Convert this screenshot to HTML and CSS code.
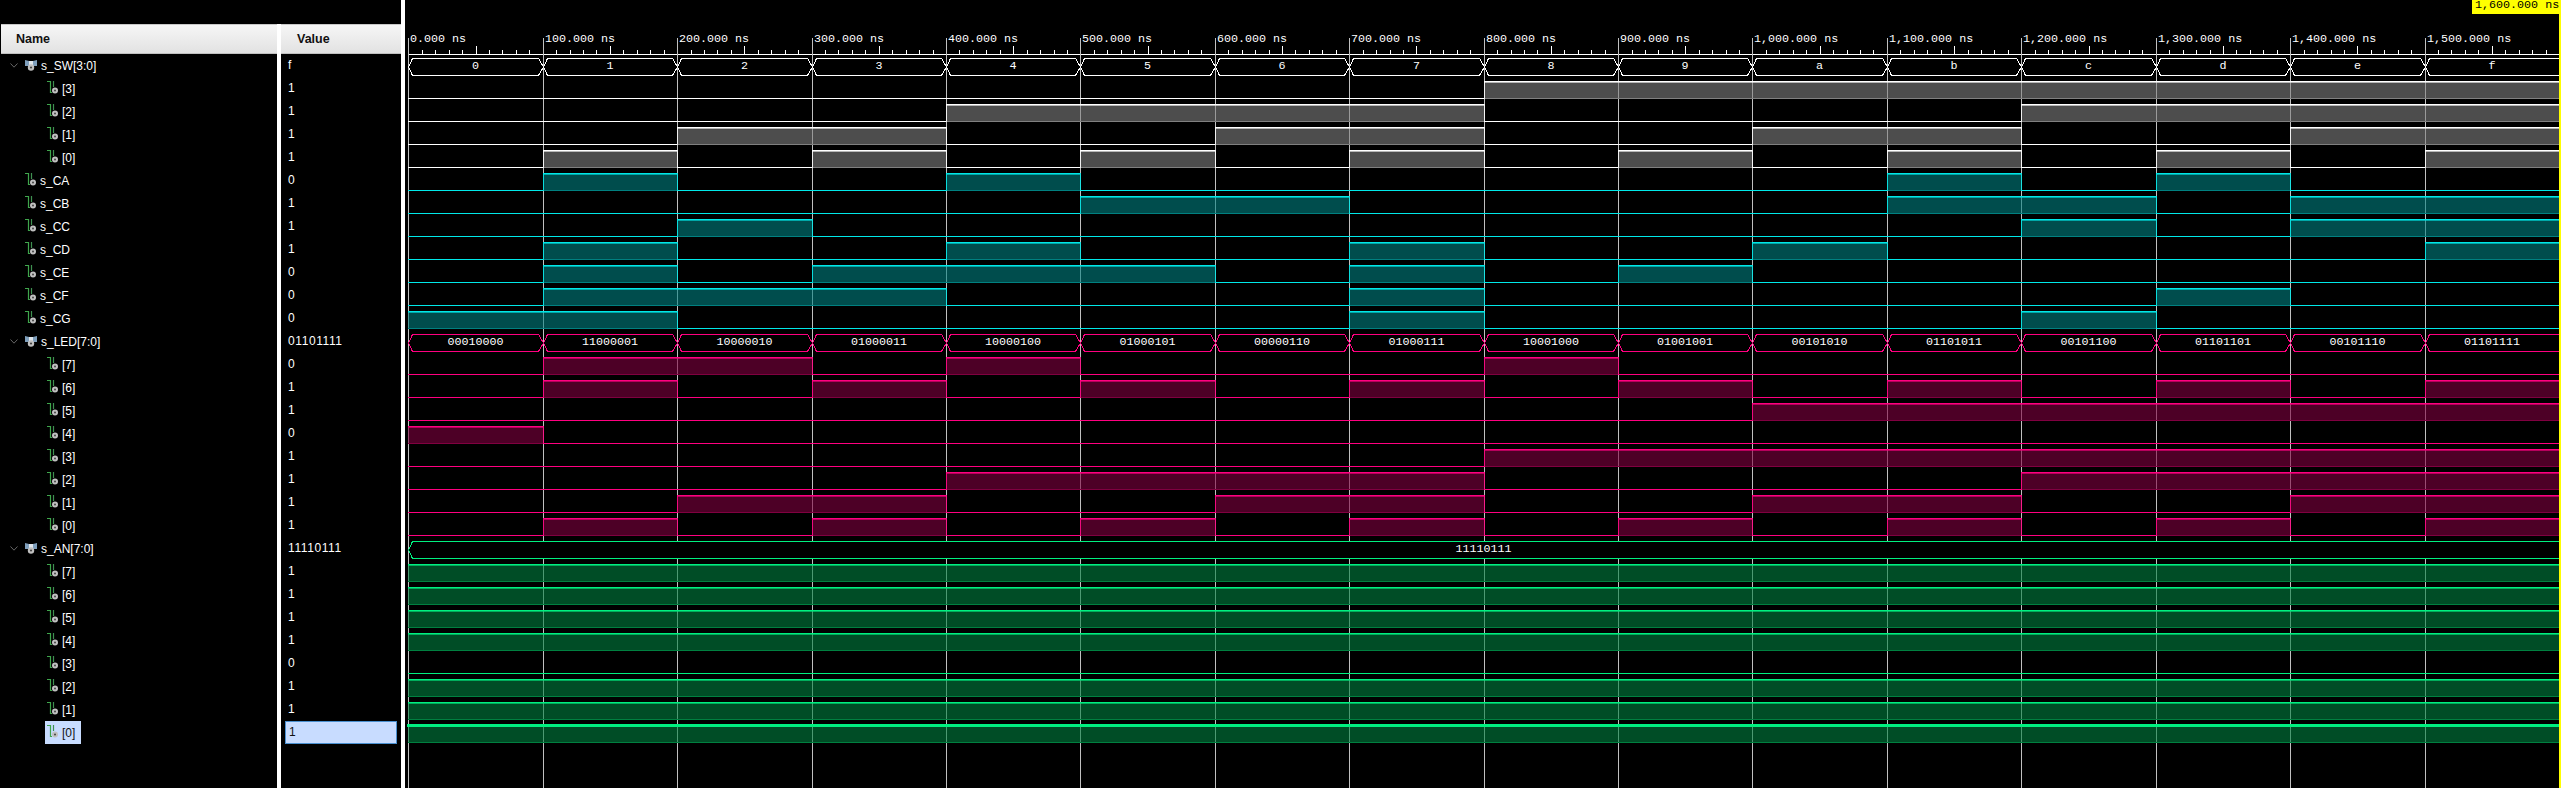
FILE: index.html
```html
<!DOCTYPE html>
<html lang="en">
	<head>
		<meta charset="utf-8">
		<title>Waveform</title>
		<link rel="stylesheet" href="styles.css">
		<script src="wave.js" defer></script>
	</head>
	<body>
		<svg class="defs" width="0" height="0">
			<symbol id="bit" viewBox="0 0 11 13">
				<path d="M0 .5H3.5V11.5H5" fill="none" stroke="#3fa64c" stroke-width="1.2"/>
				<path d="M6.5 0V6" fill="none" stroke="#3f9050" stroke-width="1.2"/>
				<circle cx="8" cy="9.5" r="3" fill="#c0c0c0"/>
				<circle cx="8" cy="9.5" r="1" fill="#444"/>
			</symbol>
			<symbol id="bus" viewBox="0 0 12 11">
				<path d="M0 0L4 1V6H0Z" fill="#7f9fbc"/>
				<path d="M12 0L8 1V6H12Z" fill="#7f9fbc"/>
				<path d="M4 1H8V6H4Z" fill="#dfe6ec"/>
				<circle cx="6" cy="7.5" r="3.2" fill="#c0c0c0"/>
				<circle cx="6" cy="7.5" r="1.1" fill="#444"/>
			</symbol>
			<symbol id="chevron" viewBox="0 0 8 5">
				<path d="M.5 .5L4 4.2L7.5 .5" fill="none" stroke="#666"/>
			</symbol>
		</svg>

		<div class="main">
			<div class="names">
				<div class="head">Name</div>
				<div class="row top"><svg class="chev"><use href="#chevron"/></svg><span class="item"><svg class="icon-bus"><use href="#bus"/></svg>s_SW[3:0]</span></div>
				<div class="row sub"><span class="item"><svg class="icon"><use href="#bit"/></svg>[3]</span></div>
				<div class="row sub"><span class="item"><svg class="icon"><use href="#bit"/></svg>[2]</span></div>
				<div class="row sub"><span class="item"><svg class="icon"><use href="#bit"/></svg>[1]</span></div>
				<div class="row sub"><span class="item"><svg class="icon"><use href="#bit"/></svg>[0]</span></div>
				<div class="row top"><span class="item"><svg class="icon"><use href="#bit"/></svg>s_CA</span></div>
				<div class="row top"><span class="item"><svg class="icon"><use href="#bit"/></svg>s_CB</span></div>
				<div class="row top"><span class="item"><svg class="icon"><use href="#bit"/></svg>s_CC</span></div>
				<div class="row top"><span class="item"><svg class="icon"><use href="#bit"/></svg>s_CD</span></div>
				<div class="row top"><span class="item"><svg class="icon"><use href="#bit"/></svg>s_CE</span></div>
				<div class="row top"><span class="item"><svg class="icon"><use href="#bit"/></svg>s_CF</span></div>
				<div class="row top"><span class="item"><svg class="icon"><use href="#bit"/></svg>s_CG</span></div>
				<div class="row top"><svg class="chev"><use href="#chevron"/></svg><span class="item"><svg class="icon-bus"><use href="#bus"/></svg>s_LED[7:0]</span></div>
				<div class="row sub"><span class="item"><svg class="icon"><use href="#bit"/></svg>[7]</span></div>
				<div class="row sub"><span class="item"><svg class="icon"><use href="#bit"/></svg>[6]</span></div>
				<div class="row sub"><span class="item"><svg class="icon"><use href="#bit"/></svg>[5]</span></div>
				<div class="row sub"><span class="item"><svg class="icon"><use href="#bit"/></svg>[4]</span></div>
				<div class="row sub"><span class="item"><svg class="icon"><use href="#bit"/></svg>[3]</span></div>
				<div class="row sub"><span class="item"><svg class="icon"><use href="#bit"/></svg>[2]</span></div>
				<div class="row sub"><span class="item"><svg class="icon"><use href="#bit"/></svg>[1]</span></div>
				<div class="row sub"><span class="item"><svg class="icon"><use href="#bit"/></svg>[0]</span></div>
				<div class="row top"><svg class="chev"><use href="#chevron"/></svg><span class="item"><svg class="icon-bus"><use href="#bus"/></svg>s_AN[7:0]</span></div>
				<div class="row sub"><span class="item"><svg class="icon"><use href="#bit"/></svg>[7]</span></div>
				<div class="row sub"><span class="item"><svg class="icon"><use href="#bit"/></svg>[6]</span></div>
				<div class="row sub"><span class="item"><svg class="icon"><use href="#bit"/></svg>[5]</span></div>
				<div class="row sub"><span class="item"><svg class="icon"><use href="#bit"/></svg>[4]</span></div>
				<div class="row sub"><span class="item"><svg class="icon"><use href="#bit"/></svg>[3]</span></div>
				<div class="row sub"><span class="item"><svg class="icon"><use href="#bit"/></svg>[2]</span></div>
				<div class="row sub"><span class="item"><svg class="icon"><use href="#bit"/></svg>[1]</span></div>
				<div class="row sub"><span class="item selected"><svg class="icon"><use href="#bit"/></svg>[0]</span></div>
			</div>
			<div class="sash"></div>
			<div class="values">
				<div class="head">Value</div>
				<div class="val">f</div>
				<div class="val">1</div>
				<div class="val">1</div>
				<div class="val">1</div>
				<div class="val">1</div>
				<div class="val">0</div>
				<div class="val">1</div>
				<div class="val">1</div>
				<div class="val">1</div>
				<div class="val">0</div>
				<div class="val">0</div>
				<div class="val">0</div>
				<div class="val">01101111</div>
				<div class="val">0</div>
				<div class="val">1</div>
				<div class="val">1</div>
				<div class="val">0</div>
				<div class="val">1</div>
				<div class="val">1</div>
				<div class="val">1</div>
				<div class="val">1</div>
				<div class="val">11110111</div>
				<div class="val">1</div>
				<div class="val">1</div>
				<div class="val">1</div>
				<div class="val">1</div>
				<div class="val">0</div>
				<div class="val">1</div>
				<div class="val">1</div>
				<div class="val editing">1</div>
			</div>
			<div class="sash full"></div>
			<svg id="wave" class="wave" width="2156" height="788" viewBox="405 0 2156 788"></svg>
		</div>
	</body>
</html>
```

FILE: styles.css
```css
body {
	margin: 0;
	background-color: #000;
	color: #fff;
	font-family: "Liberation Sans", sans-serif;
	font-size: 12px;
	overflow: hidden;
}

.defs {
	position: absolute;
}

.main {
	display: flex;
	height: 788px;
}

.names {
	width: 277px;
	padding-top: 24px;
	box-sizing: border-box;
}
.values {
	width: 120px;
	padding-top: 24px;
	box-sizing: border-box;
}
.sash {
	width: 4px;
	margin-top: 24px;
	background-color: #fff;
}
.sash.full {
	margin-top: 0;
}
.wave {
	display: block;
	flex: none;
}

.head {
	height: 28px;
	line-height: 28px;
	border-top: 1px solid #c8c8c8;
	border-bottom: 1px solid #c0c0c0;
	background: linear-gradient(#f6f6f6, #e2e2e2);
	color: #111;
	font-size: 12.5px;
	font-weight: bold;
}
.names .head {
	margin-left: 1px;
	padding-left: 15px;
}
.values .head {
	padding-left: 16px;
}

.row {
	display: flex;
	align-items: center;
	height: 23px;
}
.row.top {
	padding-left: 23px;
}
.row.sub {
	padding-left: 45px;
}
.chev {
	width: 8px;
	height: 5px;
	margin-left: -13px;
	margin-right: 5px;
	flex: none;
}
.item {
	display: flex;
	align-items: center;
	height: 23px;
	padding: 0 2px;
}
.item.selected {
	background-color: #c8dcff;
	color: #111;
	padding-right: 6px;
}
.icon {
	width: 11px;
	height: 13px;
	margin-right: 4px;
	margin-bottom: 2px;
	flex: none;
}
.icon-bus {
	width: 12px;
	height: 11px;
	margin-right: 4px;
	flex: none;
}

.val {
	height: 23px;
	line-height: 23px;
	padding-left: 7px;
	letter-spacing: .6px;
}
.val.editing {
	height: 21px;
	line-height: 21px;
	margin-left: 4px;
	padding-left: 3px;
	width: 107px;
	border: 1px solid #4a90d0;
	background-color: #c8dcff;
	color: #111;
}

.wave-text {
	font-family: "Liberation Mono", monospace;
	font-size: 11.7px;
	fill: #fff;
}
.wave-text.middle {
	text-anchor: middle;
}
.wave-text.cursor {
	fill: #000;
}
```

FILE: wave.js
```js
const svg = document.getElementById("wave")
const NS = "http://www.w3.org/2000/svg"

const X0 = 408.3
const PITCH = 134.42
const XEND = 2559
const gx = n => Math.min(Math.round(X0 + PITCH * n), XEND)

const WHITE = { line: "#fff", dim: "#808080" }
const TEAL = { line: "#00e8e8", dim: "#008080" }
const PINK = { line: "#ff0080", dim: "#800040" }
const GREEN = { line: "#00f080", dim: "#008040" }

const add = (name, attrs, text) => {
	const el = document.createElementNS(NS, name)
	for (const k in attrs) el.setAttribute(k, attrs[k])
	if (text != null) el.textContent = text
	svg.appendChild(el)
	return el
}
const box = (x, y, w, h, fill, extra) =>
	add("rect", { x, y, width: w, height: h, fill, "shape-rendering": "crispEdges", ...extra })

const rowTop = r => 58 + 23 * r
const rowLow = r => 75 + 23 * r

// ruler + grid
box(X0 | 0, 54, XEND - (X0 | 0), 1, "#fff")
for (let i = 0; i < 160; i++) {
	const x = Math.round(X0 + PITCH * i / 10)
	if (i % 10 == 0) continue
	const h = i % 5 == 0 ? 8 : 4
	box(x, 54 - h, 1, h, "#fff")
}
const labels = ["0.000 ns", "100.000 ns", "200.000 ns", "300.000 ns", "400.000 ns", "500.000 ns", "600.000 ns", "700.000 ns", "800.000 ns",
	"900.000 ns", "1,000.000 ns", "1,100.000 ns", "1,200.000 ns", "1,300.000 ns", "1,400.000 ns", "1,500.000 ns"]
labels.forEach((text, n) => {
	box(gx(n), 38, 1, 750, "#c0c0c0")
	add("text", { x: gx(n) + 2, y: 42, class: "wave-text" }, text)
})

const bus = (r, color, cells) => {
	const top = rowTop(r) + .5
	const low = rowLow(r) + .5
	const mid = (top + low) / 2
	cells.forEach(c => {
		const a = gx(c.from)
		const b = gx(c.to)
		const last = b >= XEND
		const points = [[a + .5, mid], [a + 4.5, top], [b - 4.5, top]]
		if (!last) points.push([b + .5, mid])
		else points.push([b, top], [b, low])
		points.push([b - 4.5, low], [a + 4.5, low], [a + .5, mid])
		// black fill hides the grid line inside the bus
		add("polyline", {
			points: points.map(p => p.join(",")).join(" "),
			fill: "#000",
			stroke: color.line,
			"stroke-width": 1,
			"shape-rendering": "crispEdges"
		})
		add("text", { x: (a + b) / 2, y: rowTop(r) + 11, class: "wave-text middle" }, c.text)
	})
}

const signal = (r, color, bits, selected) => {
	const top = rowTop(r)
	const low = rowLow(r)
	let start = 0
	for (let i = 1; i <= bits.length; i++) {
		if (i < bits.length && bits[i] == bits[start]) continue
		const a = gx(start)
		const b = gx(i)
		if (bits[start]) {
			box(a, top, b - a, low - top, color.dim, { "fill-opacity": .6 })
			box(a, low, b - a, 1, color.dim)
			if (selected) box(a - 1, top - 1, b - a + 1, 3, color.line)
			else {
				box(a, top, b - a, 1, color.line)
				box(a, top + 1, b - a, 1, color.line, { "fill-opacity": .6 })
			}
		} else {
			box(a, low, b - a, 1, color.line)
		}
		if (start > 0) box(a, top, 1, low - top + 1, color.line, { "fill-opacity": .85 })
		start = i
	}
}

const hex = "0123456789abcdef"
const cellsOf = texts => texts.map((text, n) => ({ from: n, to: n + 1, text }))
const onesIn = list => Array.from({ length: 16 }, (_, n) => list.includes(n) ? 1 : 0)

// s_SW
bus(0, WHITE, cellsOf(hex.split("")))
for (let b = 3; b >= 0; b--) {
	signal(4 - b, WHITE, Array.from({ length: 16 }, (_, n) => (n >> b) & 1))
}

// seven segment lines, high means segment is off
const segments = [
	[1, 4, 11, 13],
	[5, 6, 11, 12, 14, 15],
	[2, 12, 14, 15],
	[1, 4, 7, 10, 15],
	[1, 3, 4, 5, 7, 9],
	[1, 2, 3, 7, 13],
	[0, 1, 7, 12]
]
segments.forEach((list, i) => signal(5 + i, TEAL, onesIn(list)))

// s_LED
const led = ["00010000", "11000001", "10000010", "01000011", "10000100", "01000101", "00000110", "01000111",
	"10001000", "01001001", "00101010", "01101011", "00101100", "01101101", "00101110", "01101111"]
bus(12, PINK, cellsOf(led))
for (let b = 0; b < 8; b++) {
	signal(13 + b, PINK, led.map(v => +v[b]))
}

// s_AN
bus(21, GREEN, [{ from: 0, to: 16, text: "11110111" }])
const an = "11110111"
for (let b = 0; b < 8; b++) {
	signal(22 + b, GREEN, Array(16).fill(+an[b]), b == 7)
}

// cursor
box(2559, 14, 2, 774, "#ff0")
box(2472, 0, 89, 14, "#ff0")
add("text", { x: 2475, y: 8, class: "wave-text cursor" }, "1,600.000 ns")
```
